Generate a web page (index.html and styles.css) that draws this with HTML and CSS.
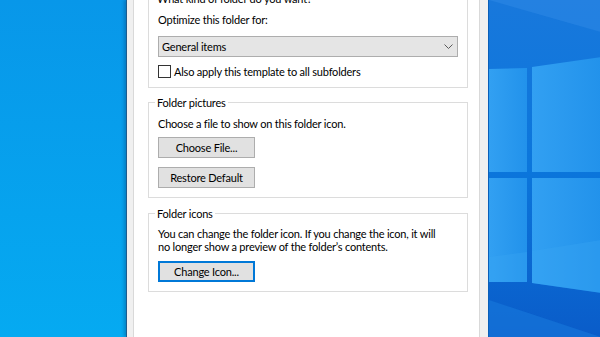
FILE: index.html
```html
<!DOCTYPE html>
<html lang="en">
<head>
  <meta charset="UTF-8">
  <title>Customize</title>
  <link rel="stylesheet" href="styles.css">
</head>
<body>
  <div class="desktop">
    <!-- Обои слева -->
    <div class="wall-left"></div>

    <!-- Окно свойств папки, вкладка "Настройка" -->
    <div class="window">
      <div class="tab-page">
        <fieldset class="group group-first">
          <legend>What kind of folder do you want?</legend>
          <p>Optimize this folder for:</p>
          <div class="select">
            <span>General items</span>
            <svg class="chevron" width="9" height="5" viewBox="0 0 9 5"><path d="M0.5 0.5 L4.5 4.5 L8.5 0.5" fill="none" stroke="#5a5a5a" stroke-width="1"/></svg>
          </div>
          <label class="check"><span class="box"></span>Also apply this template to all subfolders</label>
        </fieldset>

        <fieldset class="group">
          <legend>Folder pictures</legend>
          <p>Choose a file to show on this folder icon.</p>
          <button class="btn">Choose File...</button>
          <button class="btn btn-second">Restore Default</button>
        </fieldset>

        <fieldset class="group group-icons">
          <legend>Folder icons</legend>
          <p>You can change the folder icon. If you change the icon, it will<br>no longer show a preview of the folder’s contents.</p>
          <button class="btn btn-default">Change Icon...</button>
        </fieldset>
      </div>
    </div>

    <!-- Обои справа с логотипом -->
    <div class="wall-right">
      <svg width="112" height="337" viewBox="0 0 112 337">
        <defs>
          <linearGradient id="bg" x1="0" y1="0" x2="0" y2="1">
            <stop offset="0" stop-color="#1878dc"/>
            <stop offset="0.5" stop-color="#0b76dc"/>
            <stop offset="1" stop-color="#0a5cc9"/>
          </linearGradient>
          <linearGradient id="pane" x1="0" y1="0" x2="1" y2="0">
            <stop offset="0" stop-color="#32a0f2"/>
            <stop offset="1" stop-color="#2292eb"/>
          </linearGradient>
        </defs>
        <rect width="112" height="337" fill="url(#bg)"/>
        <polygon points="0,0 112,0 112,32" fill="#2a84e2" opacity="0.7"/>
        <polygon points="0,69 38,68 38,172 0,172" fill="url(#pane)"/>
        <polygon points="43,67 112,57 112,172 43,172" fill="url(#pane)"/>
        <polygon points="0,178 38,178 38,282 0,282" fill="url(#pane)"/>
        <polygon points="43,178 112,178 112,293 43,283" fill="url(#pane)"/>
        <polygon points="0,257 38,252 38,282 0,282" fill="#3aa6f4" opacity="0.35"/>
        <polygon points="43,251 112,240 112,293 43,283" fill="#3aa6f4" opacity="0.35"/>
        <polygon points="0,300 112,337 0,337" fill="#1a7ee0" opacity="0.5"/>
      </svg>
    </div>
  </div>
</body>
</html>
```

FILE: styles.css
```css
/* Основа */
body {
  margin: 0;
  width: 600px;
  height: 337px;
  overflow: hidden;
  font-family: 'Lato', 'Liberation Sans', sans-serif;
  font-size: 11px;
  line-height: 13px;
  letter-spacing: -0.2px;
  color: #000;
}

.desktop {
  display: flex;
  height: 337px;
}

/* Рабочий стол */
.wall-left {
  width: 126px;
  flex-shrink: 0;
  background: linear-gradient(180deg, #0897e9, #05aaf1);
}

.wall-right {
  flex: 1;
  display: flex;
  border-left: 1px solid #0a5fb8;
}

/* Окно */
.window {
  width: 362px;
  flex-shrink: 0;
  box-sizing: border-box;
  border-left: 1px solid #1d5c8e;
  background: #f0f0f0;
  padding: 0 8px 0 6px;
  box-shadow: -2px 0 3px rgba(0, 50, 100, 0.3);
}

.tab-page {
  display: flow-root;
  height: 100%;
  box-sizing: border-box;
  background: #fff;
  border: 1px solid #d9d9d9;
  border-top: none;
  border-bottom: none;
  padding: 0 11px 0 14px;
}

/* Группы */
.group {
  margin: 8px 0 0;
  padding: 8px 9px 9px;
  border: 1px solid #dcdcdc;
  min-width: 0;
}

.group-first {
  margin-top: -8px;
}

.group-icons {
  margin-top: 9px;
  padding-top: 7px;
}

.group legend {
  padding: 0 2px;
  margin-left: -3px;
  line-height: 13px;
}

.group p {
  margin: 0;
}

/* Выпадающий список */
.select {
  display: flex;
  align-items: center;
  justify-content: space-between;
  height: 21px;
  box-sizing: border-box;
  margin-top: 10px;
  padding: 0 4px 0 3px;
  background: #e5e5e5;
  border: 1px solid #adadad;
}

/* Флажок */
.check {
  display: flex;
  align-items: center;
  gap: 3px;
  height: 13px;
  margin-top: 8px;
}

.box {
  width: 13px;
  height: 13px;
  box-sizing: border-box;
  border: 1px solid #333;
  background: #fff;
}

/* Кнопки */
.btn {
  display: block;
  width: 97px;
  height: 21px;
  box-sizing: border-box;
  margin: 7px 0 0;
  padding: 0;
  font: inherit;
  letter-spacing: inherit;
  color: #000;
  background: #e1e1e1;
  border: 1px solid #adadad;
}

.btn-second {
  margin-top: 9px;
}

.btn-default {
  margin-top: 8px;
  border: 2px solid #0078d7;
}
```
